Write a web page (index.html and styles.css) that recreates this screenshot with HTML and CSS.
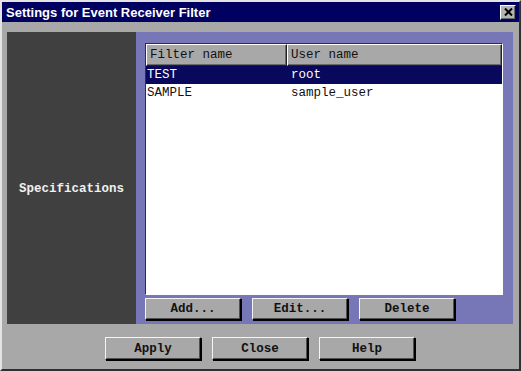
FILE: index.html
```html
<!DOCTYPE html>
<html lang="en">
<head>
    <meta charset="UTF-8">
    <title>Settings for Event Receiver Filter</title>
    <link rel="stylesheet" href="styles.css">
</head>
<body>
    <div class="window">
        <div class="titlebar">
            <span class="title">Settings for Event Receiver Filter</span>
            <button class="close" aria-label="Close">
                <svg width="9" height="8" viewBox="0 0 9 8">
                    <path d="M1 0.5 L8 7.5 M8 0.5 L1 7.5" stroke="#000" stroke-width="2" fill="none"/>
                </svg>
            </button>
        </div>
        <div class="content">
            <div class="panel">
                <div class="side">Specifications</div>
                <div class="main">
                    <div class="listbox">
                        <div class="list-head">
                            <div class="col col-filter">Filter name</div>
                            <div class="col col-user">User name</div>
                        </div>
                        <div class="row selected">
                            <span class="cell-filter">TEST</span>
                            <span class="cell-user">root</span>
                        </div>
                        <div class="row">
                            <span class="cell-filter">SAMPLE</span>
                            <span class="cell-user">sample_user</span>
                        </div>
                    </div>
                    <div class="list-buttons">
                        <button class="btn">Add...</button>
                        <button class="btn">Edit...</button>
                        <button class="btn">Delete</button>
                    </div>
                </div>
            </div>
            <div class="dialog-buttons">
                <button class="btn btn-dialog">Apply</button>
                <button class="btn btn-dialog">Close</button>
                <button class="btn btn-dialog">Help</button>
            </div>
        </div>
    </div>
</body>
</html>
```

FILE: styles.css
```css
body {
    margin: 0;
    background-color: #a8a8a8;
    font-family: 'Liberation Mono', 'Courier New', monospace;
}
.window {
    box-sizing: border-box;
    width: 521px;
    height: 371px;
    background-color: #a8a8a8;
    border: 2px solid;
    border-color: #e4e4e4 #303030 #303030 #e4e4e4;
}
.titlebar {
    height: 20px;
    background-color: #000060;
    display: flex;
    align-items: center;
    justify-content: space-between;
    padding: 0 3px 0 4px;
}
.title {
    font-family: 'Liberation Sans', Arial, sans-serif;
    font-weight: bold;
    font-size: 13px;
    color: #ffffff;
}
.close {
    box-sizing: border-box;
    width: 16px;
    height: 15px;
    padding: 0;
    background-color: #b4b4b4;
    border: 1px solid;
    border-color: #ffffff #101010 #101010 #ffffff;
    box-shadow: inset -1px -1px 0 #6a6a6a;
    display: flex;
    align-items: center;
    justify-content: center;
}
.content {
    padding: 10px 6px 0 5px;
}
.panel {
    display: flex;
    height: 292px;
}
.side {
    width: 129px;
    background-color: #404040;
    color: #f0f0f0;
    font-size: 12.5px;
    font-weight: bold;
    display: flex;
    align-items: center;
    justify-content: center;
    padding-top: 22px;
    box-sizing: border-box;
}
.main {
    flex: 1;
    background-color: #7777b8;
    padding: 11px 10px 4px 9px;
    display: flex;
    flex-direction: column;
    gap: 3px;
}
.listbox {
    box-sizing: border-box;
    height: 252px;
    background-color: #ffffff;
    border: 1px solid;
    border-color: #303030 #ffffff #ffffff #303030;
    font-size: 12.5px;
    color: #111111;
}
.list-head {
    display: flex;
    height: 22px;
}
.col {
    box-sizing: border-box;
    background-color: #a8a8a8;
    border: 1px solid;
    border-color: #ffffff #202020 #202020 #ffffff;
    box-shadow: inset -1px -1px 0 #6a6a6a;
    padding-left: 3px;
    display: flex;
    align-items: center;
}
.col-filter {
    width: 141px;
}
.col-user {
    flex: 1;
}
.row {
    display: flex;
    height: 18px;
    align-items: center;
}
.row.selected {
    background-color: #08085c;
    color: #ffffff;
}
.cell-filter {
    width: 144px;
    padding-left: 1px;
}
.list-buttons {
    display: flex;
    gap: 11px;
}
.btn {
    box-sizing: border-box;
    width: 96px;
    height: 22px;
    padding: 0;
    background-color: #a8a8a8;
    border: 1px solid;
    border-color: #f4f4f4 #000000 #000000 #f4f4f4;
    box-shadow: inset -1px -1px 0 #505050, 1px 1px 0 #000000;
    font-family: 'Liberation Mono', 'Courier New', monospace;
    font-size: 12.5px;
    font-weight: bold;
    color: #111111;
}
.dialog-buttons {
    display: flex;
    justify-content: center;
    gap: 11px;
    margin-top: 13px;
}
.btn-dialog {
    height: 23px;
}
```
